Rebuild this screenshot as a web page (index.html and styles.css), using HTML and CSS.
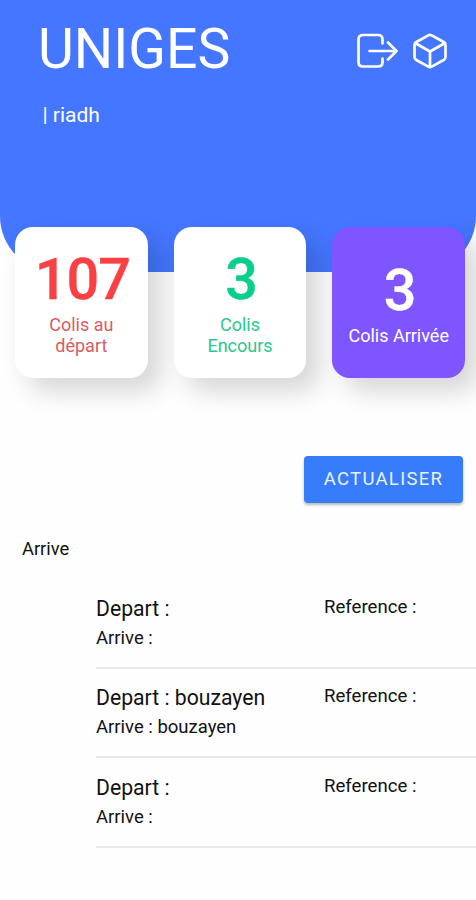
FILE: index.html
```html
<!DOCTYPE html>
<html lang="fr">
<head>
<meta charset="utf-8">
<title>UNIGES</title>
<link rel="stylesheet" href="styles.css">
</head>
<body>
<header class="header">
  <div class="topbar">
    <h1 class="brand">UNIGES</h1>
    <div class="actions">
      <svg class="icon-exit" width="44" height="38" viewBox="0 0 44 38"><path d="M28.500 12.500V8.500Q28.500 4 24 4H9Q4.500 4 4.500 8.500V31Q4.500 35.500 9 35.500H24Q28.500 35.500 28.500 31V27.500"/><path d="M15.500 20H42.500M34 11.500L42.500 20L34 28.500"/></svg>
      <svg class="icon-cube" width="38" height="38" viewBox="0 0 38 38"><path d="M17.300 4.400L5.300 11Q3.500 12 3.500 14V26Q3.500 28 5.300 29L17.300 35.600Q19 36.500 20.700 35.600L32.700 29Q34.500 28 34.500 26V14Q34.500 12 32.700 11L20.700 4.400Q19 3.500 17.300 4.400ZM4 12L19 20.500L34 12M19 20.500V36"/></svg>
    </div>
  </div>
  <p class="user">| riadh</p>
</header>
<section class="stats">
  <div class="card card-red"><strong>107</strong><span>Colis au<br>départ</span></div>
  <div class="card card-green"><strong>3</strong><span>Colis<br>Encours</span></div>
  <div class="card card-purple"><strong>3</strong><span>Colis Arrivée</span></div>
</section>
<div class="toolbar"><button class="refresh">ACTUALISER</button></div>
<h2 class="list-title">Arrive</h2>
<main class="list">
  <div class="item"><div class="route"><p class="from">Depart :</p><p class="to">Arrive :</p></div><p class="ref">Reference :</p></div>
  <div class="item"><div class="route"><p class="from">Depart : bouzayen</p><p class="to">Arrive : bouzayen</p></div><p class="ref">Reference :</p></div>
  <div class="item"><div class="route"><p class="from">Depart :</p><p class="to">Arrive :</p></div><p class="ref">Reference :</p></div>
</main>
</body>
</html>
```
FILE: styles.css
```css
* { box-sizing: border-box; margin: 0; padding: 0; }
body {
  width: 476px;
  height: 900px;
  overflow: hidden;
  background: #fefefe;
  color: #111;
  font-family: Roboto, "Liberation Sans", sans-serif;
}
.header {
  height: 271.500px;
  padding: 15px 27px 0 38px;
  background: #4476ff;
  border-radius: 0 0 56px 56px;
  color: #fff;
}
.topbar { display: flex; justify-content: space-between; height: 68px; }
.brand { font-size: 55.300px; font-weight: 400; line-height: 69px; }
.actions { display: flex; gap: 13px; padding-top: 15.500px; }
.actions svg { fill: none; stroke: #fff; stroke-width: 2.700; stroke-linecap: round; stroke-linejoin: round; }
.user { margin: 20px 0 0 4.500px; font-size: 21px; line-height: 24px; }
.stats { display: flex; gap: 26px; margin-top: -45px; padding: 0 11px 0 15px; }
.card {
  display: flex;
  flex: 1;
  flex-direction: column;
  align-items: center;
  justify-content: center;
  height: 151.500px;
  border-radius: 18px;
  background: #fff;
  box-shadow: 13px 13px 26px rgba(0, 0, 0, .16);
  text-align: center;
}
.card strong { margin-top: -2px; padding-left: 2px; font-size: 57.500px; font-weight: 500; line-height: 68px; -webkit-text-stroke: .4px currentColor; letter-spacing: -1px; }
.card span { font-size: 18px; line-height: 21px; white-space: nowrap; }
.card-red strong { color: #f94144; }
.card-red span { color: #da5c60; }
.card-green strong { color: #0acf8b; }
.card-green span { color: #28c98f; }
.card-purple { background: #7f55ff; color: #fff; }
.toolbar { display: flex; justify-content: flex-end; margin-top: 78px; padding-right: 13px; }
.refresh {
  width: 159px;
  height: 47px;
  border: 0;
  border-radius: 4px;
  background: #377dfb;
  box-shadow: 0 2px 3px rgba(0, 0, 0, .28);
  color: #e9f2ff;
  font: 400 18.500px/47px Roboto, sans-serif;
  letter-spacing: 1.300px;
}
.list-title { margin: 35px 0 0 22px; font-size: 18.300px; font-weight: 400; line-height: 22px; }
.list { margin: 19px 0 0 96px; }
.item {
  display: grid;
  grid-template-columns: 228px 1fr;
  height: 89.500px;
  padding-top: 16.500px;
  border-bottom: 2px solid #e9e9e9;
}
.from { font-size: 21.200px; line-height: 26px; }
.to { margin-top: 4px; font-size: 18.500px; line-height: 24px; }
.ref { font-size: 18.600px; line-height: 23px; }
```
